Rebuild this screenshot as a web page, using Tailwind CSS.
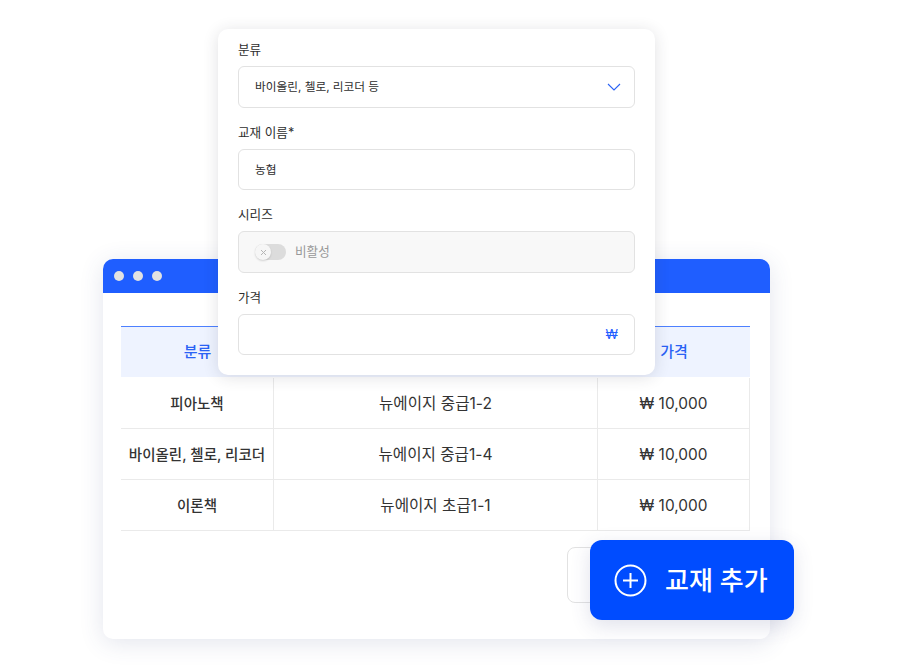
<!DOCTYPE html>
<html lang="ko">
<head>
    <meta charset="utf-8">
    <title>교재 추가</title>
    <script src="https://cdn.jsdelivr.net/npm/@tailwindcss/browser@4"></script>
</head>
<body class="bg-white font-['Inter','Noto_Sans_CJK_KR',sans-serif] text-[#333]">
    <div class="relative w-[897px] h-[669px] overflow-hidden">

        <!-- Table window -->
        <div class="absolute left-[103px] top-[259px] w-[667px] h-[380px] bg-white rounded-[10px] shadow-[0_4px_24px_rgba(60,70,130,0.14)]">
            <div class="h-[34px] bg-[#1f5eff] rounded-t-[10px] flex items-center gap-[9px] pl-[11px] pb-[1px]">
                <span class="w-[10px] h-[10px] rounded-full bg-[#e2e2e2]"></span>
                <span class="w-[10px] h-[10px] rounded-full bg-[#e2e2e2]"></span>
                <span class="w-[10px] h-[10px] rounded-full bg-[#e2e2e2]"></span>
            </div>
            <div class="ml-[18px] mt-[33px] w-[629px] text-[14.5px] font-medium">
                <div class="grid grid-cols-[153px_324px_152px] h-[51px] bg-[#eef3ff] border-t border-[#4d80ff] text-[#2a62f5] text-[15px] text-center items-center">
                    <div>분류</div>
                    <div>교재 이름</div>
                    <div>가격</div>
                </div>
                <div class="grid grid-cols-[153px_324px_152px] h-[52px] pt-[1px] border-b border-[#eaeaea] text-center items-center">
                    <div class="h-full flex items-center justify-center pt-[1px] border-r border-[#eaeaea]">피아노책</div>
                    <div class="h-full flex items-center justify-center pt-[1px] border-r border-[#eaeaea] font-normal text-[15.6px]">뉴에이지 중급1-2</div>
                    <div class="h-full flex items-center justify-center pt-[1px] border-r border-[#eaeaea] font-normal text-[15.4px]">₩ 10,000</div>
                </div>
                <div class="grid grid-cols-[153px_324px_152px] h-[51px] border-b border-[#eaeaea] text-center items-center">
                    <div class="h-full flex items-center justify-center pt-[1px] border-r border-[#eaeaea]">바이올린, 첼로, 리코더</div>
                    <div class="h-full flex items-center justify-center pt-[1px] border-r border-[#eaeaea] font-normal text-[15.6px]">뉴에이지 중급1-4</div>
                    <div class="h-full flex items-center justify-center pt-[1px] border-r border-[#eaeaea] font-normal text-[15.4px]">₩ 10,000</div>
                </div>
                <div class="grid grid-cols-[153px_324px_152px] h-[51px] border-b border-[#eaeaea] text-center items-center">
                    <div class="h-full flex items-center justify-center pt-[1px] border-r border-[#eaeaea]">이론책</div>
                    <div class="h-full flex items-center justify-center pt-[1px] border-r border-[#eaeaea] font-normal text-[15.6px]">뉴에이지 초급1-1</div>
                    <div class="h-full flex items-center justify-center pt-[1px] border-r border-[#eaeaea] font-normal text-[15.4px]">₩ 10,000</div>
                </div>
            </div>
        </div>

        <!-- Button peeking out behind the add button -->
        <div class="absolute left-[567px] top-[547px] w-[60px] h-[56px] bg-white border border-[#e2e2e2] rounded-[8px]"></div>

        <!-- Form card -->
        <div class="absolute left-[218px] top-[29px] w-[437px] h-[346px] bg-white rounded-[10px] px-[20px] pt-[11px] shadow-[0_2px_16px_rgba(40,40,60,0.14)] text-[12.6px] text-[#2e2e2e]">
            <label class="block h-[19px] leading-[19px]">분류</label>
            <div class="mt-[7px] h-[41.6px] border border-[#e2e2e2] rounded-[6px] flex items-center justify-between pl-[16px] pr-[13px] pt-[1px] text-[11.7px]">
                <span>바이올린, 첼로, 리코더 등</span>
                <svg class="w-[14px] h-[8px]" viewBox="0 0 14 8" fill="none" stroke="#2a62f5" stroke-width="1.1"><path d="M1 1l6 6 6-6"/></svg>
            </div>
            <label class="block mt-[15px] h-[19px] leading-[19px]">교재 이름*</label>
            <div class="mt-[7px] h-[41.6px] border border-[#e2e2e2] rounded-[6px] flex items-center pl-[16px] pt-[3px] text-[11.7px]">농협</div>
            <label class="block mt-[15px] h-[19px] leading-[19px]">시리즈</label>
            <div class="mt-[7px] h-[41.6px] bg-[#f8f8f8] border border-[#e2e2e2] rounded-[6px] flex items-center pl-[16px] pt-[1px] gap-[9px] text-[#999]">
                <span class="relative w-[31px] h-[16px] rounded-full bg-[#dcdcdc]">
                    <span class="absolute left-0 top-0 w-[16px] h-[16px] rounded-full bg-[#f6f6f6] shadow-[0_1px_2px_rgba(0,0,0,0.15)] flex items-center justify-center">
                        <svg class="w-[7px] h-[7px]" viewBox="0 0 7 7" fill="none" stroke="#b5b5b5" stroke-width="1"><path d="M1 1l5 5M6 1L1 6"/></svg>
                    </span>
                </span>
                <span>비활성</span>
            </div>
            <label class="block mt-[15px] h-[19px] leading-[19px]">가격</label>
            <div class="mt-[7px] h-[41.6px] border border-[#e2e2e2] rounded-[6px] flex items-center justify-end pr-[16px] pt-[1px] text-[13px] text-[#1f5eff]">₩</div>
        </div>

        <!-- Add button -->
        <div class="absolute left-[590px] top-[540px] w-[204px] h-[80px] bg-[#004cff] rounded-[12px] flex items-center pl-[24px] gap-[18px] text-white text-[26px] font-medium shadow-[0_6px_20px_rgba(60,70,130,0.16)]">
            <svg class="w-[33px] h-[33px]" viewBox="0 0 33 33" fill="none" stroke="white" stroke-width="2"><circle cx="16.5" cy="16.5" r="15"/><path d="M16.5 9v15M9 16.5h15"/></svg>
            <span>교재 추가</span>
        </div>
    </div>
</body>
</html>
